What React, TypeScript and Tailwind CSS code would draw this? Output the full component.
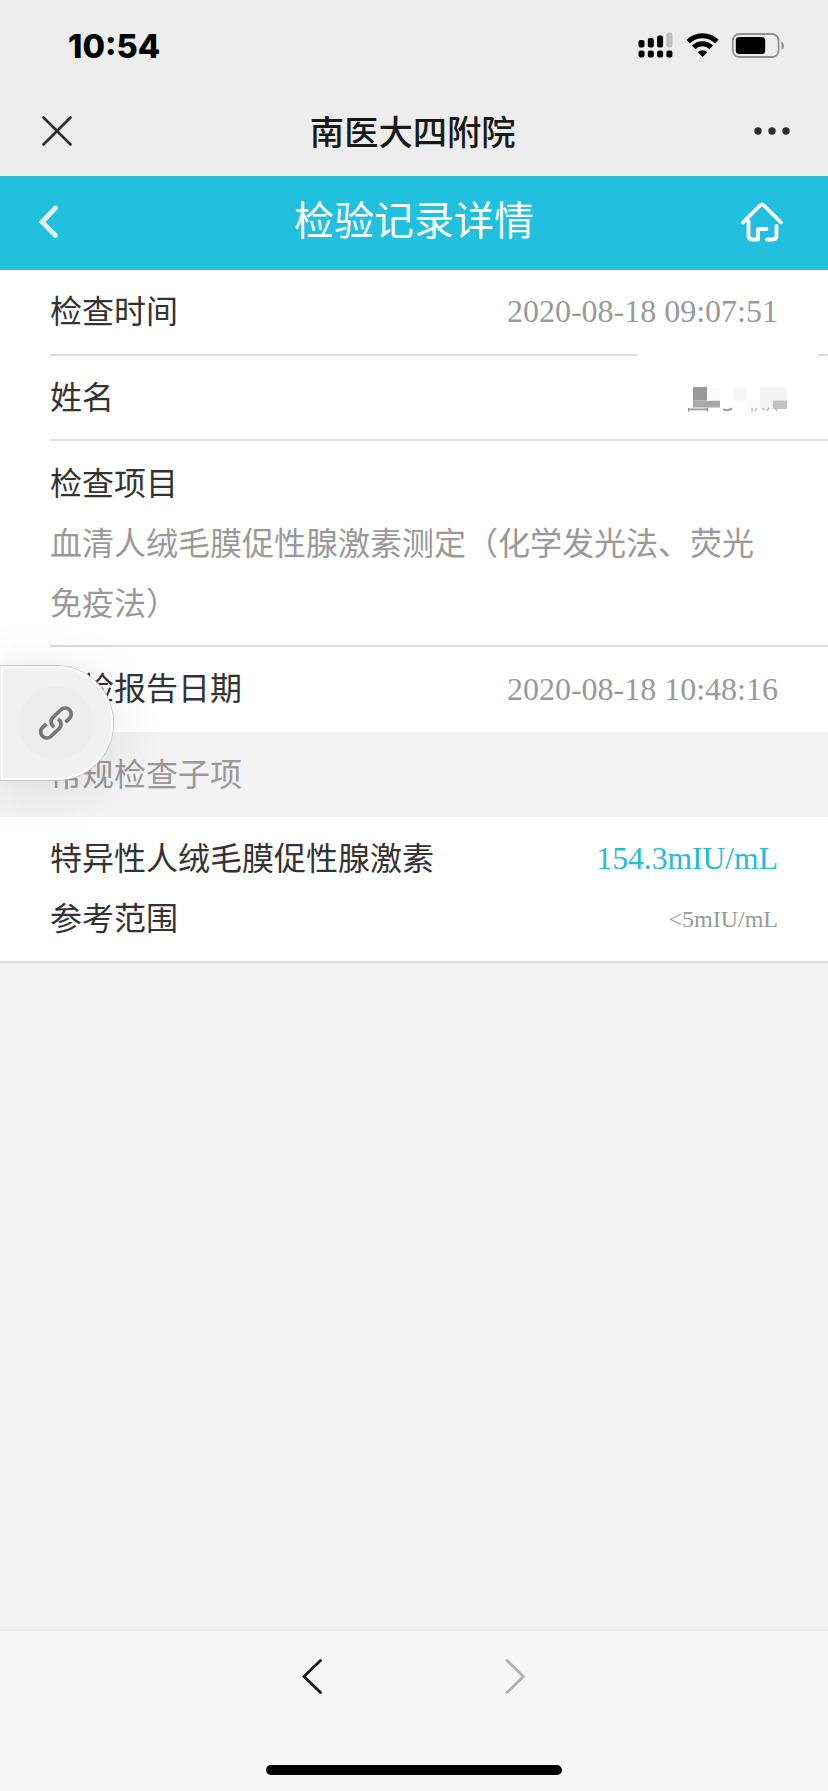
import type { ReactNode } from 'react';

const checkItem = '血清人绒毛膜促性腺激素测定（化学发光法、荧光免疫法）';

function StatusIcons() {
  return (
    <svg width="150" height="28" viewBox="0 0 150 28" className="block">
      {/* dual sim signal */}
      <g fill="#000">
        <rect x="0.5" y="8" width="6" height="7.5" rx="2" />
        <rect x="9.8" y="6" width="6" height="9.5" rx="2" />
        <rect x="19.1" y="3.5" width="6" height="12" rx="2" />
        <rect x="0.5" y="18.5" width="6" height="7" rx="2" />
        <rect x="9.8" y="18.5" width="6" height="7" rx="2" />
        <rect x="19.1" y="18.5" width="6" height="7" rx="2" />
        <rect x="28.4" y="18.5" width="6" height="7" rx="2" />
      </g>
      <rect x="28.4" y="0.5" width="6" height="15" rx="2" fill="#bcbcbc" />
      {/* wifi */}
      <g fill="none" stroke="#000" strokeWidth="5">
        <path d="M50.2 9.6a20.4 20.4 0 0 1 28.6 0" />
        <path d="M55.7 15.4a12.7 12.7 0 0 1 17.6 0" />
      </g>
      <path d="M59.7 20.2a7 7 0 0 1 9.6 0l-4.8 5z" fill="#000" />
      {/* battery */}
      <rect x="94.8" y="2" width="45.8" height="23" rx="6.5" fill="none" stroke="#8f8f8f" strokeWidth="1.8" />
      <rect x="97.8" y="5" width="29.4" height="17" rx="3.5" fill="#000" />
      <path d="M143.5 9.4c3.2 1.4 3.2 7 0 8.4z" fill="#8f8f8f" />
    </svg>
  );
}

function Row({ label, children }: { label: string; children?: ReactNode }) {
  return (
    <div className="ml-[50px] flex h-[85.5px] items-start justify-between border-b-2 border-[#dcdcdc] pt-[12px] pr-[50px] leading-[60px]">
      <span className="text-[#333]">{label}</span>
      {children}
    </div>
  );
}

function Mosaic() {
  return (
    <svg width="100" height="26" viewBox="0 0 100 26" className="mt-[19px] mr-[-10px] block">
      <rect x="5" y="0" width="14" height="13.5" fill="#999" />
      <rect x="5" y="13.5" width="27" height="7" fill="#a8a8a8" />
      <rect x="19" y="0" width="13" height="13.5" fill="#fafafa" />
      <rect x="45" y="0" width="14" height="13.5" fill="#f6f6f6" />
      <rect x="59" y="13.5" width="13" height="7" fill="#fafafa" />
      <rect x="72" y="0" width="27" height="21.5" fill="#f3f3f3" />
      <rect x="85" y="13.5" width="14" height="8.5" fill="#c2c2c2" />
      <path d="M0 22.4h20M0.7 21v3.4M19.3 21v3.4" stroke="#999" strokeWidth="1.6" fill="none" />
      <path d="M35 22q4 2.6 9-.6" stroke="#999" strokeWidth="2" fill="none" />
      <path d="M64 21v3.4M68.5 21l-1.5 3M74 21.5l3 1M81 21l-2 2.5M87 21l2 3" stroke="#aaa" strokeWidth="1.3" fill="none" />
    </svg>
  );
}

function FloatingLink() {
  return (
    <div className="absolute top-[665px] left-0 flex h-[116px] w-[114px] items-center rounded-r-[58px] border border-l-0 border-[#c6c6c6] bg-[#f1f1f1] pl-[19px] shadow-[0_6px_50px_10px_rgba(0,0,0,0.07)]">
      <div className="pointer-events-none absolute inset-y-0 right-0 left-[1px] rounded-r-[57px] border-2 border-[#fcfcfc]" />
      <div className="flex h-[74px] w-[74px] items-center justify-center rounded-full bg-[#ededed]">
        <svg width="36" height="36" viewBox="0 0 36 36" fill="none" stroke="#757575" strokeWidth="3.7">
          <path d="M27.5 17.2l4-3.8a6 6 0 0 0-8.6-8.6l-8.6 8.2a6 6 0 0 0 1.8 9" />
          <path d="M8.5 18.8l-4 3.8a6 6 0 0 0 8.6 8.6l8.6-8.2a6 6 0 0 0-1.8-9" />
        </svg>
      </div>
    </div>
  );
}

export default function App() {
  return (
    <div className="relative flex h-[1791px] w-[828px] flex-col overflow-hidden bg-[#f3f3f3] font-['Liberation_Serif','Noto_Sans_CJK_SC',serif] text-[32px]">
      <header className="h-[176px] bg-[#ededed]">
        <div className="flex h-[90px] items-center justify-between pt-[2px] pr-[40px] pl-[68px]">
          <span className="font-['Inter',sans-serif] text-[32.6px] leading-none font-extrabold text-black">10:54</span>
          <StatusIcons />
        </div>
        <div className="flex h-[82px] items-center justify-between pr-[38px] pl-[41.5px]">
          <svg width="30" height="30" viewBox="0 0 30 30" stroke="#2c2c2c" strokeWidth="2.6" strokeLinecap="round">
            <path d="M1.5 1.5l27 27M28.5 1.5l-27 27" />
          </svg>
          <h1 className="pb-[2px] font-['Noto_Sans_CJK_SC',sans-serif] text-[34.3px] leading-none font-medium text-[#191919]">南医大四附院</h1>
          <svg width="36" height="10" viewBox="0 0 36 10" fill="#2c2c2c">
            <circle cx="4" cy="5" r="3.7" />
            <circle cx="18" cy="5" r="3.7" />
            <circle cx="32" cy="5" r="3.7" />
          </svg>
        </div>
      </header>

      <div className="grid h-[94px] grid-cols-[1fr_auto_1fr] items-center border-t-2 border-[#35b9d6] bg-[#20c0de] px-[45px] pb-[4px]">
        <svg width="22" height="36" viewBox="0 0 22 36" fill="none" stroke="#e6eef0" strokeWidth="4.8" className="ml-[-8px]">
          <path d="M18.5 4L5 18l13.5 13.5" strokeLinecap="round" />
        </svg>
        <h2 className="text-[40px] leading-none text-white">检验记录详情</h2>
        <svg width="42" height="40" viewBox="0 0 42 40" fill="none" stroke="#fff" strokeWidth="3.8" strokeLinecap="round" strokeLinejoin="round" className="justify-self-end">
          <path d="M2 20.5L19 3.5q2-2 4 0L40 20.5" />
          <path d="M7.5 19v14.5q0 4 4 4h5.5v-10.5h8.5" />
          <path d="M35.5 24v9.5q0 4-4 4h-5.5" />
        </svg>
      </div>

      <main className="bg-white text-[#999]">
        <div className="relative">
          <Row label="检查时间">
            <span className="mt-[-1px]">2020-08-18 09:07:51</span>
          </Row>
          <div className="absolute right-[10px] bottom-0 h-[3px] w-[181px] bg-white" />
        </div>
        <Row label="姓名">
          <Mosaic />
        </Row>
        <div className="ml-[50px] h-[206px] border-b-2 border-[#dcdcdc] pt-[13px] pr-[50px] leading-[60px]">
          <div className="text-[#333]">检查项目</div>
          <div>{checkItem}</div>
        </div>
        <div className="ml-[50px] flex h-[85px] justify-between pt-[12px] pr-[50px] leading-[60px]">
          <span className="text-[#333]">送检报告日期</span>
          <span>2020-08-18 10:48:16</span>
        </div>
        <div className="h-[85px] bg-[#f3f3f3] pt-[13px] pl-[50px] leading-[60px]">常规检查子项</div>
        <div className="h-[146px] border-b-2 border-[#dcdcdc] px-[50px] pt-[12px] leading-[60px]">
          <div className="flex justify-between">
            <span className="text-[#333]">特异性人绒毛膜促性腺激素</span>
            <span className="text-[31.6px] text-[#25bcd8]">154.3mIU/mL</span>
          </div>
          <div className="flex justify-between">
            <span className="text-[#333]">参考范围</span>
            <span className="text-2xl leading-[60px]">&lt;5mIU/mL</span>
          </div>
        </div>
      </main>

      <FloatingLink />

      <footer className="mt-auto flex h-[162px] flex-col items-center justify-between border-t-2 border-[#eaeaea] bg-[#f7f7f7] pt-[27px] pb-[16px]">
        <div className="flex gap-[180px]">
          <svg width="22" height="38" viewBox="0 0 22 38" fill="none" stroke="#181818" strokeWidth="2.8" strokeLinecap="round">
            <path d="M18.5 2.5L2 18.5l16.5 16" />
          </svg>
          <svg width="22" height="38" viewBox="0 0 22 38" fill="none" stroke="#b0b0b0" strokeWidth="2.8" strokeLinecap="round">
            <path d="M3 2.5l16.5 16L3 34.5" />
          </svg>
        </div>
        <div className="h-[10px] w-[296px] rounded-full bg-black" />
      </footer>
    </div>
  );
}
